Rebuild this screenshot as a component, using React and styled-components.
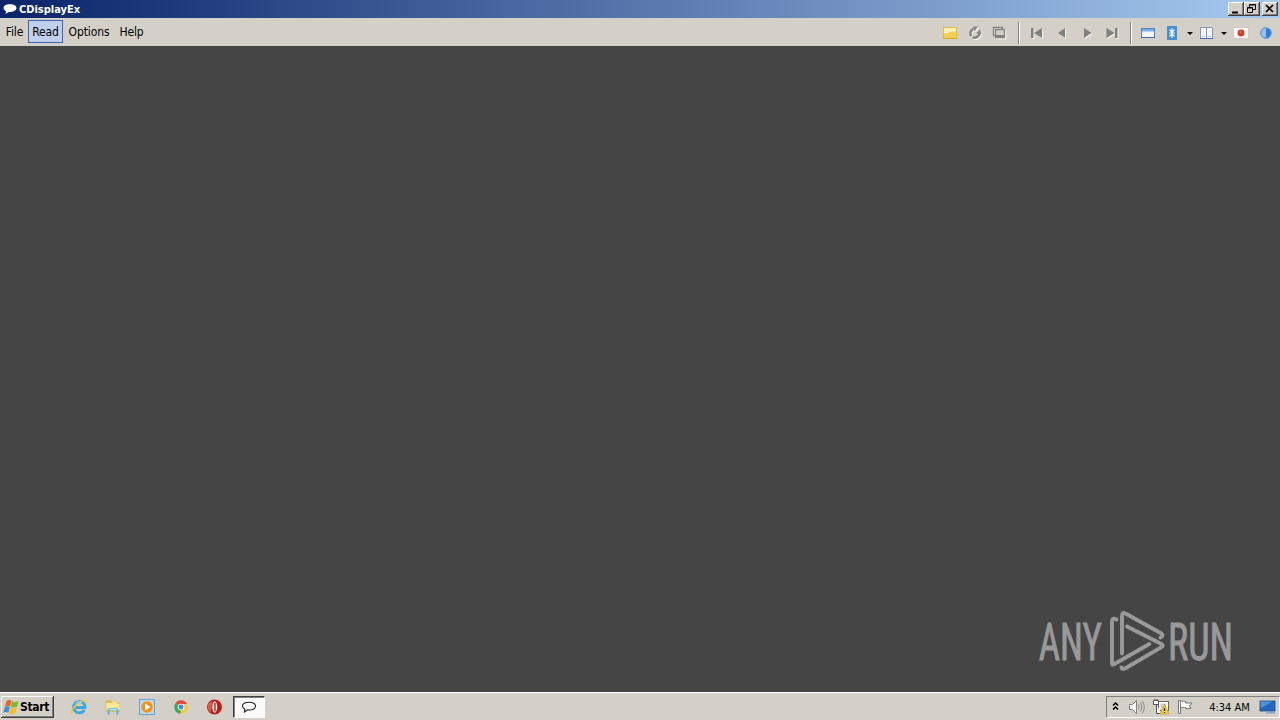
import React from "react";
import styled, { createGlobalStyle } from "styled-components";

function BubbleIcon({ outline }) {
  return (
    <svg width="16" height="14" viewBox="0 0 16 14">
      <path
        d="M8 2.200c4 0 6.500 1.500 6.500 3.900S12 10 8 10l-1.100-.1L3.500 12l.5-2.800C2.500 8.500 1.500 7.500 1.500 6.100 1.500 3.700 4 2.200 8 2.200z"
        fill="#fff"
        stroke={outline ? "#222" : "none"}
        strokeWidth="1.100"
      />
    </svg>
  );
}

function FolderIcon() {
  return (
    <svg width="16" height="16" viewBox="0 0 16 16">
      <path d="M1.500 13.500v-11h13v11z" fill="#f5cf56" stroke="#e6b93c" />
      <path d="M2 3h12v3H8L6.500 7.500H2z" fill="#fdf0b0" />
      <path d="M2 7.500h4.500L8 6h6" stroke="#fffbe0" fill="none" />
      <path d="M1 13.500h14" stroke="#dda92b" />
    </svg>
  );
}

function ReloadIcon() {
  return (
    <Disabled width="16" height="16" viewBox="0 0 16 16">
      <path d="M6.500 4A4.500 4.500 0 0 0 4.500 11.200M5.500 12A4.500 4.500 0 0 0 12.300 7.500" fill="none" stroke="#858585" strokeWidth="2.500" />
      <path d="M6 1.500h5L7.500 6.500zM9 8.500L13 4.500l1.500 4.500z" fill="#858585" />
    </Disabled>
  );
}

function PagesIcon() {
  return (
    <Disabled width="16" height="16" viewBox="0 0 16 16">
      <path d="M2.500 2.500h9v8h-9z" fill="none" stroke="#808080" strokeWidth="1.300" />
      <path d="M4.500 4.500h9v8h-9z" fill="#d4d0c8" stroke="#808080" strokeWidth="1.300" />
      <path d="M5 10h8v2H5z" fill="#808080" />
    </Disabled>
  );
}

const arrows = {
  first: "M2 3h2.500v10H2zM13 3v10L5 8z",
  prev: "M11 3v10L4 8z",
  next: "M5 3v10l7.500-5z",
  last: "M2.500 3v10l8-5zM11 3h2.500v10H11z",
};

function ArrowIcon({ kind }) {
  return (
    <Disabled width="16" height="16" viewBox="0 0 16 16">
      <path d={arrows[kind]} fill="#808080" />
    </Disabled>
  );
}

function WindowIcon() {
  return (
    <svg width="16" height="16" viewBox="0 0 16 16">
      <rect x="1.500" y="3.500" width="13" height="9" fill="#f4f9ff" stroke="#5683b9" />
      <path d="M2 4h12v2.500H2z" fill="#79ace5" />
      <path d="M1 12.500h14" stroke="#35649f" />
    </svg>
  );
}

function FitIcon() {
  return (
    <svg width="16" height="16" viewBox="0 0 16 16">
      <rect x="3.500" y="1.500" width="9" height="13" fill="#408bd3" stroke="#4d8fce" />
      <path d="M8 3v10M5 8h6M5.500 4.500L8 7.500l2.500-3M5.500 11.500L8 8.500l2.500 3" stroke="#e7f4ff" fill="none" strokeWidth="1.200" />
    </svg>
  );
}

function BookIcon() {
  return (
    <svg width="16" height="16" viewBox="0 0 16 16">
      <path d="M1.500 2.500h12v11h-12z" fill="#f4f7ff" stroke="#8295b5" />
      <path d="M7.500 2.500v11" stroke="#8295b5" />
      <path d="M1 13.500h13" stroke="#4a6ba0" />
      <path d="M3 11.500h3M9 11.500h3" stroke="#b5c9ea" />
    </svg>
  );
}

function FlagIcon() {
  return (
    <svg width="16" height="16" viewBox="0 0 16 16">
      <rect x=".5" y="2.500" width="15" height="11" fill="#fcf6f5" stroke="#d3c8c6" />
      <circle cx="8" cy="8" r="3.400" fill="#d63a2b" />
      <circle cx="7.500" cy="7" r="1" fill="#ed7769" />
    </svg>
  );
}

function InfoIcon() {
  return (
    <svg width="16" height="16" viewBox="0 0 16 16">
      <circle cx="8" cy="8" r="5.500" fill="#2f7fd6" />
      <path d="M8 3a5 5 0 0 0 0 10z" fill="#8fc4f5" />
      <circle cx="8" cy="8" r="5.300" fill="none" stroke="#5f9fdf" />
    </svg>
  );
}

function WindowsLogo() {
  return (
    <svg width="17" height="16" viewBox="0 0 17 16">
      <path d="M3.500 2C5.500.5 7 .7 8.500 1.700L7 7.500C5.500 6.500 4 6.500 2 7.500z" fill="#e8632b" />
      <path d="M9 2.200c2 1 3.700 1 6.500 0L14 7.700c-2 1-4.500 1-6.500 0z" fill="#7fb92f" />
      <path d="M1.800 8c2-1 3.500-1 5 0L5.300 13.700c-1.500-1-3-1-5 0z" fill="#3e8ddd" />
      <path d="M7.300 8.500c2 1 4.500 1 6.500 0L12.300 14c-2 1.200-4.500 1.200-6.500 0z" fill="#f6bd28" />
    </svg>
  );
}

function ExplorerIcon() {
  return (
    <svg width="18" height="18" viewBox="0 0 18 18">
      <path d="M14.300 12A5.700 5.700 0 1 1 15 9.500H5.500" fill="none" stroke="#3fa5e3" strokeWidth="2.800" />
      <path d="M2 16C-.5 13.500 6 5.500 12 3c3-1.300 5-.5 3.700 2.500" fill="none" stroke="#edc345" strokeWidth="1.400" />
      <path d="M5.500 5.500c2-2 4-2 6-1" fill="none" stroke="#a7e0fb" />
    </svg>
  );
}

function LibraryIcon() {
  return (
    <svg width="18" height="18" viewBox="0 0 18 18">
      <path d="M1.500 3.500l1-1.500h4.500l1 1.500h5l1 2h2V14H1.500z" fill="#e0bf55" />
      <path d="M2.500 5H8l1-1.500h3L13 6h2.500v6h-13z" fill="#fcea9c" />
      <path d="M3.500 16.500V12q0-2 2-2h7q2 0 2 2v4.500H12v-4H6v4z" fill="#6fb7e0" />
      <path d="M5 11.500h8" stroke="#c5edff" />
    </svg>
  );
}

function MediaIcon() {
  return (
    <svg width="18" height="18" viewBox="0 0 18 18">
      <rect x="1.500" y="1.500" width="15" height="15" fill="#b1d8f2" stroke="#65a4d3" />
      <circle cx="9" cy="9" r="6.200" fill="#f29220" stroke="#e3f0f7" strokeWidth=".6" />
      <path d="M7 5.500v7L12.500 9z" fill="#fff" />
    </svg>
  );
}

function ChromeIcon() {
  return (
    <svg width="18" height="18" viewBox="0 0 18 18">
      <path d="M9 9L3.200 5.600A6.800 6.800 0 0 1 15 5.900H9z" fill="#df4b3d" />
      <path d="M9 9l6-3.100a6.800 6.800 0 0 1-6.500 9.900z" fill="#f7ca39" />
      <path d="M9 9l-.5 6.800A6.800 6.800 0 0 1 3.200 5.600z" fill="#43a65b" />
      <circle cx="9" cy="9" r="3.300" fill="#f5f5f5" />
      <circle cx="9" cy="9" r="2.400" fill="#4687df" />
    </svg>
  );
}

function OperaIcon() {
  return (
    <svg width="18" height="18" viewBox="0 0 18 18">
      <circle cx="8.500" cy="9" r="7.500" fill="#b7211d" />
      <path d="M3 5A7 7 0 0 0 4.500 14.500C5.500 13 5.500 5 6.500 3z" fill="#dd5b4b" />
      <ellipse cx="8.700" cy="9" rx="2.500" ry="5.800" fill="#f0e6e2" />
      <path d="M9 4.500v9" stroke="#8e1815" strokeWidth="1.200" />
    </svg>
  );
}

function ChevronsIcon() {
  return (
    <svg width="7" height="9" viewBox="0 0 7 9">
      <path d="M1 3.500L3.500 1 6 3.500M1 7.500L3.500 5 6 7.500" fill="none" stroke="#000" strokeWidth="1.500" />
    </svg>
  );
}

function SpeakerIcon() {
  return (
    <svg width="18" height="16" viewBox="0 0 18 16">
      <path d="M1.500 5.500h3l4-4v13l-4-4h-3z" fill="#fff" stroke="#808080" />
      <path d="M10.500 5.500q1.500 2.500 0 5M12.500 3.500q3 4.500 0 9M14.500 2q3.500 6 0 12" fill="none" stroke="#8c8c8c" />
    </svg>
  );
}

function NetworkIcon() {
  return (
    <svg width="17" height="16" viewBox="0 0 17 16">
      <rect x="5.500" y="2.500" width="10" height="9" fill="#fff" stroke="#666" />
      <path d="M7.500 4.500h6v5h-6z" fill="#c9c9c9" />
      <path d="M.5 1.500h5v4h-5zM2 0v2M4 0v2M3.500 6v8.500h5" fill="#fff" stroke="#555" />
      <path d="M11.500 5.500l4.500 9.500H7z" fill="#f7d32e" stroke="#c99d12" strokeWidth=".7" />
      <path d="M11.500 9v3M11.500 13v1" stroke="#222" strokeWidth="1.200" />
    </svg>
  );
}

function ActionIcon() {
  return (
    <svg width="17" height="16" viewBox="0 0 17 16">
      <path d="M1.500 1.500h2v13h-2z" fill="#fff" stroke="#777" />
      <path d="M3.500 2.500c2-1 3.500 0 5 0V4h6.500L12.500 7l1.500 2.500H8.500V8.500c-1.500 0-3-.5-5 .5z" fill="#fff" stroke="#777" />
    </svg>
  );
}

function DesktopIcon() {
  return (
    <svg width="17" height="16" viewBox="0 0 17 16">
      <rect x="1" y="2" width="15" height="10" fill="#2369bb" stroke="#1c4b8a" strokeWidth=".8" />
      <path d="M1.500 2.500h12L2 9z" fill="#4d94da" />
      <path d="M7 13h9v1.500H7z" fill="#86a9ce" />
    </svg>
  );
}

function Watermark() {
  return (
    <Brand width="200" height="68" viewBox="0 0 200 68">
      <g fill="#999" stroke="#999" strokeWidth=".9" fontFamily="Roboto, sans-serif" fontSize="52">
        <text x="2.800" y="53.500" textLength="63" lengthAdjust="spacingAndGlyphs">ANY</text>
        <text x="132" y="53.500" textLength="65" lengthAdjust="spacingAndGlyphs">RUN</text>
      </g>
      <g fill="none" stroke="#999" strokeWidth="3.900" strokeLinecap="round" strokeLinejoin="round">
        <path d="M80.500 13.500q-4.500-2.500-4.500 2V57q0 2.500 2 1.200L113.300 38" />
        <path d="M86 47.500V10q0-4.500 3.500-2.500L125.500 27.500q2.500 2-1 4" />
        <path d="M91 20.500L125.500 38q2.500 1.700 0 3.200L89 62.500q-3 1.500-3.500-1" />
      </g>
    </Brand>
  );
}

const menu = [
  { label: "File", width: 27 },
  { label: "Read", width: 35, active: true },
  { label: "Options", width: 52 },
  { label: "Help", width: 33 },
];

export default function App() {
  return (
    <Screen>
      <GlobalStyle />
      <TitleBar>
        <BubbleIcon />
        <Title>CDisplayEx</Title>
        <Caption>
          <svg width="16" height="14"><path d="M4 10.500h6" stroke="#000" strokeWidth="2" /></svg>
        </Caption>
        <Caption $gap={2}>
          <svg width="16" height="14">
            <path d="M5.500 5V2.500h6v5H9M5 3h7M3.500 5.500h5v5h-5zM3 6h6" fill="none" stroke="#000" />
          </svg>
        </Caption>
        <Caption>
          <svg width="16" height="14"><path d="M4 3l7 7M11 3l-7 7" stroke="#000" strokeWidth="1.700" /></svg>
        </Caption>
      </TitleBar>
      <MenuBar>
        <Menu>
          {menu.map((item) => (
            <MenuItem key={item.label} $width={item.width} $active={item.active}>
              {item.label}
            </MenuItem>
          ))}
        </Menu>
        <Tools>
          <Tool $width={25}><FolderIcon /></Tool>
          <Tool $width={25}><ReloadIcon /></Tool>
          <Tool $width={24}><PagesIcon /></Tool>
          <Separator />
          {Object.keys(arrows).map((kind) => (
            <Tool key={kind} $width={25}><ArrowIcon kind={kind} /></Tool>
          ))}
          <Separator $left={6} />
          <Tool $width={24}><WindowIcon /></Tool>
          <Tool $width={24}><FitIcon /></Tool>
          <Drop />
          <Tool $width={22}><BookIcon /></Tool>
          <Drop />
          <Tool $width={22}><FlagIcon /></Tool>
          <Tool $width={28}><InfoIcon /></Tool>
        </Tools>
      </MenuBar>
      <Viewer>
        <Watermark />
      </Viewer>
      <TaskBar>
        <StartButton>
          <WindowsLogo />
          Start
        </StartButton>
        <QuickLaunch>
          <ExplorerIcon />
          <LibraryIcon />
          <MediaIcon />
          <ChromeIcon />
          <OperaIcon />
        </QuickLaunch>
        <TaskButton><BubbleIcon outline /></TaskButton>
        <Tray>
          <ChevronsIcon />
          <TrayIcons>
            <SpeakerIcon />
            <NetworkIcon />
            <ActionIcon />
          </TrayIcons>
          <Clock>4:34 AM</Clock>
          <DesktopIcon />
        </Tray>
      </TaskBar>
    </Screen>
  );
}

const GlobalStyle = createGlobalStyle`
  * {
    box-sizing: border-box;
  }
  body {
    margin: 0;
    overflow: hidden;
  }
  svg {
    display: block;
    flex: none;
  }
`;

const Screen = styled.div`
  display: flex;
  flex-direction: column;
  width: 1280px;
  height: 720px;
  font-family: "DejaVu Sans Condensed", "DejaVu Sans", sans-serif;
  font-stretch: condensed;
  font-size: 11px;
  color: #000;
  background: #454545;
`;

const Disabled = styled.svg`
  filter: drop-shadow(1px 1px 0 #f8f6f0);
`;

const TitleBar = styled.header`
  display: flex;
  align-items: center;
  height: 18px;
  padding: 0 2px;
  background: linear-gradient(to right, #0a246a, #a6caf0);
`;

const Title = styled.span`
  flex: 1;
  padding-left: 1px;
  color: #fff;
  font-weight: 700;
`;

const Caption = styled.button`
  width: 16px;
  height: 14px;
  padding: 0;
  margin: 0 ${(props) => props.$gap || 0}px 0 0;
  border: none;
  background: #d4d0c8;
  box-shadow: inset -1px -1px #404040, inset 1px 1px #fff, inset -2px -2px #808080;
`;

const MenuBar = styled.nav`
  display: flex;
  justify-content: space-between;
  height: 28px;
  background: #d4d0c8;
`;

const Menu = styled.div`
  display: flex;
  padding: 2px 0 0 1px;
`;

const MenuItem = styled.div`
  display: flex;
  align-items: center;
  justify-content: center;
  width: ${(props) => props.$width}px;
  height: 23px;
  font-size: 12px;
  letter-spacing: -0.1px;
  border: 1px solid ${(props) => (props.$active ? "#3c64b4" : "transparent")};
  background: ${(props) => (props.$active ? "#bfd0ef" : "none")};
`;

const Tools = styled.div`
  display: flex;
  align-items: center;
  padding-top: 2px;
`;

const Tool = styled.div`
  display: flex;
  justify-content: center;
  width: ${(props) => props.$width}px;
`;

const Separator = styled.div`
  width: 2px;
  height: 22px;
  margin: 0 4px 0 ${(props) => props.$left || 7}px;
  border-left: 1px solid #808080;
  border-right: 1px solid #fff;
`;

const Drop = styled.div`
  width: 5px;
  margin: 1px 3px;
  border: 3px solid transparent;
  border-top-color: #000;
  border-bottom: none;
`;

const Viewer = styled.main`
  display: flex;
  flex: 1;
  align-items: flex-end;
  justify-content: flex-end;
  padding: 0 44px 18px 0;
`;

const Brand = styled.svg`
  overflow: visible;
`;

const TaskBar = styled.footer`
  display: flex;
  align-items: center;
  height: 28px;
  padding: 0 0 0 1px;
  border-top: 1px solid #fff;
  background: #d4d0c8;
`;

const StartButton = styled.button`
  display: flex;
  align-items: center;
  width: 53px;
  height: 22px;
  padding: 0 2px;
  border: none;
  font: inherit;
  font-size: 12px;
  font-weight: 700;
  letter-spacing: -0.3px;
  background: #d4d0c8;
  box-shadow: inset -1px -1px #404040, inset 1px 1px #fff, inset -2px -2px #808080;
`;

const QuickLaunch = styled.div`
  display: flex;
  gap: 16px;
  padding: 0 9px 0 16px;
`;

const TaskButton = styled.div`
  display: flex;
  align-items: center;
  justify-content: center;
  width: 32px;
  height: 22px;
  border: 1px solid #404040;
  border-color: #404040 #fff #fff #404040;
  background: #fbfafa;
  box-shadow: inset 1px 1px #808080;
`;

const Tray = styled.div`
  display: flex;
  align-items: center;
  width: 174px;
  height: 22px;
  padding: 0 3px 0 5px;
  margin-left: auto;
  border: 1px solid #808080;
  border-right-color: #fff;
  border-bottom-color: #fff;
`;

const TrayIcons = styled.div`
  display: flex;
  gap: 7px;
  padding-left: 9px;
`;

const Clock = styled.span`
  flex: 1;
  text-align: center;
  padding: 1px 0 0 6px;
  white-space: nowrap;
`;
